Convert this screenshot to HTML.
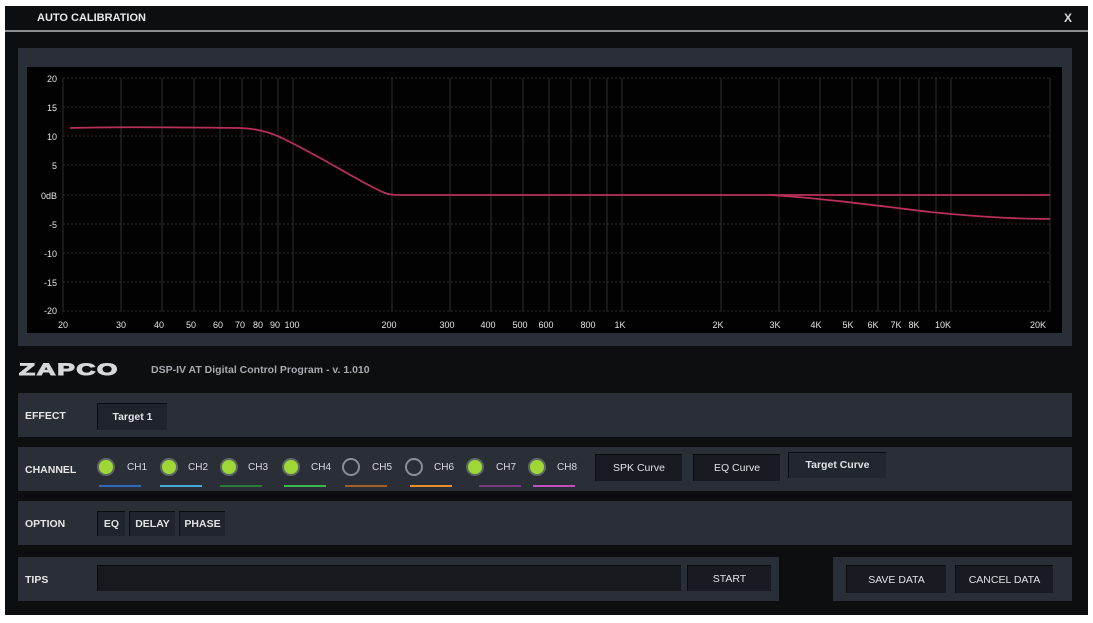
<!DOCTYPE html>
<html><head><meta charset="utf-8"><style>
*{margin:0;padding:0;box-sizing:border-box}
body{width:1093px;height:623px;background:#fff;position:relative;overflow:hidden;font-family:"Liberation Sans",sans-serif}
.win{position:absolute;left:5px;top:6px;width:1083px;height:609px;background:#0d0e10}
.title{position:absolute;left:32px;top:6px;color:#e8e8e8;font-size:11px;font-weight:bold}
.x{position:absolute;right:16px;top:5px;color:#ddd;font-size:12px;font-weight:bold}
.tline{position:absolute;left:0;top:24px;width:100%;height:2px;background:#8a8c90}
.panel{position:absolute;background:#2a2e36}
.lbl{position:absolute;color:#e6e6e6;font-size:10.5px;font-weight:bold}
.btn{position:absolute;background:#181b21;color:#dfe1e5;font-size:10.5px;text-align:center;border-top:1px solid #0a0b0e;border-left:1px solid #0a0b0e}
.led{position:absolute;width:18px;height:18px;border-radius:50%;background:#9fd836;border:2px solid #5e6864}
.led.off{background:#2a2e36;border:2px solid #8a8e96}
.ch{position:absolute;color:#d8dae0;font-size:10px}
.ul{position:absolute;height:2px;width:42px}
</style></head><body>
<div class="win">
<div class="title">AUTO CALIBRATION</div>
<div class="x">X</div>
<div class="tline"></div>
</div>
<div class="panel" style="left:18px;top:48px;width:1054px;height:298px"></div>
<svg style="position:absolute;left:0;top:0" width="1093" height="623">
<rect x="27" y="67" width="1035" height="266" fill="#020202"/>
<g stroke="#2c2d30" stroke-width="1">
<line x1="63" y1="78" x2="63" y2="312"/><line x1="121" y1="78" x2="121" y2="312"/><line x1="162" y1="78" x2="162" y2="312"/><line x1="194" y1="78" x2="194" y2="312"/><line x1="220" y1="78" x2="220" y2="312"/><line x1="242" y1="78" x2="242" y2="312"/><line x1="261" y1="78" x2="261" y2="312"/><line x1="278" y1="78" x2="278" y2="312"/><line x1="293" y1="78" x2="293" y2="312"/><line x1="392" y1="78" x2="392" y2="312"/><line x1="450" y1="78" x2="450" y2="312"/><line x1="491" y1="78" x2="491" y2="312"/><line x1="523" y1="78" x2="523" y2="312"/><line x1="549" y1="78" x2="549" y2="312"/><line x1="571" y1="78" x2="571" y2="312"/><line x1="590" y1="78" x2="590" y2="312"/><line x1="607" y1="78" x2="607" y2="312"/><line x1="622" y1="78" x2="622" y2="312"/><line x1="721" y1="78" x2="721" y2="312"/><line x1="779" y1="78" x2="779" y2="312"/><line x1="820" y1="78" x2="820" y2="312"/><line x1="852" y1="78" x2="852" y2="312"/><line x1="878" y1="78" x2="878" y2="312"/><line x1="900" y1="78" x2="900" y2="312"/><line x1="919" y1="78" x2="919" y2="312"/><line x1="936" y1="78" x2="936" y2="312"/><line x1="951" y1="78" x2="951" y2="312"/><line x1="1050" y1="78" x2="1050" y2="312"/>
</g>
<g stroke="#2a2b2e" stroke-width="1" stroke-dasharray="2,2">
<line x1="63" y1="78" x2="1050" y2="78"/><line x1="63" y1="107" x2="1050" y2="107"/><line x1="63" y1="136" x2="1050" y2="136"/><line x1="63" y1="165" x2="1050" y2="165"/><line x1="63" y1="195" x2="1050" y2="195"/><line x1="63" y1="224" x2="1050" y2="224"/><line x1="63" y1="253" x2="1050" y2="253"/><line x1="63" y1="282" x2="1050" y2="282"/><line x1="63" y1="311" x2="1050" y2="311"/>
</g>
<g fill="#e4e4e4" font-size="9" font-family="Liberation Sans" text-anchor="end">
<text x="57" y="82">20</text><text x="57" y="111">15</text><text x="57" y="140">10</text><text x="57" y="169">5</text><text x="57" y="199">0dB</text><text x="57" y="228">-5</text><text x="57" y="257">-10</text><text x="57" y="286">-15</text><text x="57" y="314">-20</text>
</g>
<g fill="#e4e4e4" font-size="9" font-family="Liberation Sans" text-anchor="middle">
<text x="63" y="328">20</text><text x="121" y="328">30</text><text x="159" y="328">40</text><text x="191" y="328">50</text><text x="218" y="328">60</text><text x="240" y="328">70</text><text x="258" y="328">80</text><text x="275" y="328">90</text><text x="292" y="328">100</text><text x="389" y="328">200</text><text x="447" y="328">300</text><text x="488" y="328">400</text><text x="520" y="328">500</text><text x="546" y="328">600</text><text x="588" y="328">800</text><text x="620" y="328">1K</text><text x="718" y="328">2K</text><text x="775" y="328">3K</text><text x="816" y="328">4K</text><text x="848" y="328">5K</text><text x="873" y="328">6K</text><text x="896" y="328">7K</text><text x="914" y="328">8K</text><text x="943" y="328">10K</text><text x="1038" y="328">20K</text>
</g>
<path d="M70 128 C100 127 160 127 240 128 C262 129 275 134 290 142 C330 162 365 185 385 193 C390 195 395 195 400 195 L1050 195" stroke="#b8305a" stroke-width="1.8" fill="none"/>
<path d="M770 195 C820 198 880 206 930 212 C980 217 1020 219 1050 219" stroke="#b8305a" stroke-width="1.8" fill="none"/>
</svg>
<div style="position:absolute;left:19px;top:360px;color:#d8d8d8;font-size:17px;font-weight:900;letter-spacing:1px;transform:scaleX(1.55);transform-origin:left;-webkit-text-stroke:1px #d8d8d8">ZAPCO</div>
<div style="position:absolute;left:151px;top:364px;color:#a8aab0;font-size:10.5px;font-weight:bold">DSP-IV AT Digital Control Program - v. 1.010</div>

<div class="panel" style="left:18px;top:393px;width:1054px;height:44px"></div>
<div class="lbl" style="left:25px;top:410px">EFFECT</div>
<div class="btn" style="left:97px;top:403px;width:70px;height:27px;line-height:26px;background:#1f242c;font-weight:bold">Target 1</div>

<div class="panel" style="left:18px;top:447px;width:1054px;height:44px"></div>
<div class="lbl" style="left:25px;top:464px">CHANNEL</div>
<div class="led" style="left:97px;top:458px"></div><div class="ch" style="left:127px;top:462px">CH1</div><div class="ul" style="left:99px;top:485px;background:#2e6ab8"></div>
<div class="led" style="left:160px;top:458px"></div><div class="ch" style="left:188px;top:462px">CH2</div><div class="ul" style="left:160px;top:485px;background:#4aa8d8"></div>
<div class="led" style="left:220px;top:458px"></div><div class="ch" style="left:248px;top:462px">CH3</div><div class="ul" style="left:220px;top:485px;background:#2f7a3a"></div>
<div class="led" style="left:282px;top:458px"></div><div class="ch" style="left:311px;top:462px">CH4</div><div class="ul" style="left:284px;top:485px;background:#3cb84a"></div>
<div class="led off" style="left:342px;top:458px"></div><div class="ch" style="left:372px;top:462px">CH5</div><div class="ul" style="left:345px;top:485px;background:#a06028"></div>
<div class="led off" style="left:405px;top:458px"></div><div class="ch" style="left:434px;top:462px">CH6</div><div class="ul" style="left:410px;top:485px;background:#e8902a"></div>
<div class="led" style="left:466px;top:458px"></div><div class="ch" style="left:496px;top:462px">CH7</div><div class="ul" style="left:479px;top:485px;background:#7a3a80"></div>
<div class="led" style="left:528px;top:458px"></div><div class="ch" style="left:557px;top:462px">CH8</div><div class="ul" style="left:533px;top:485px;background:#c050c0"></div>
<div class="btn" style="left:595px;top:454px;width:87px;height:27px;line-height:26px">SPK Curve</div>
<div class="btn" style="left:693px;top:454px;width:87px;height:27px;line-height:26px">EQ Curve</div>
<div class="btn" style="left:788px;top:452px;width:98px;height:26px;line-height:24px;background:#22272f;font-weight:bold">Target Curve</div>

<div class="panel" style="left:18px;top:501px;width:1054px;height:44px"></div>
<div class="lbl" style="left:25px;top:518px">OPTION</div>
<div class="btn" style="left:97px;top:511px;width:28px;height:25px;line-height:24px;background:#20252d;font-weight:bold">EQ</div>
<div class="btn" style="left:129px;top:511px;width:46px;height:25px;line-height:24px;background:#20252d;font-weight:bold">DELAY</div>
<div class="btn" style="left:179px;top:511px;width:46px;height:25px;line-height:24px;background:#20252d;font-weight:bold">PHASE</div>

<div class="panel" style="left:18px;top:557px;width:761px;height:44px"></div>
<div class="lbl" style="left:25px;top:574px">TIPS</div>
<div class="btn" style="left:97px;top:565px;width:584px;height:26px;background:#16191e"></div>
<div class="btn" style="left:687px;top:565px;width:84px;height:26px;line-height:26px">START</div>
<div class="panel" style="left:833px;top:557px;width:239px;height:44px"></div>
<div class="btn" style="left:846px;top:565px;width:100px;height:28px;line-height:28px">SAVE DATA</div>
<div class="btn" style="left:955px;top:565px;width:98px;height:28px;line-height:28px">CANCEL DATA</div>
</body></html>
